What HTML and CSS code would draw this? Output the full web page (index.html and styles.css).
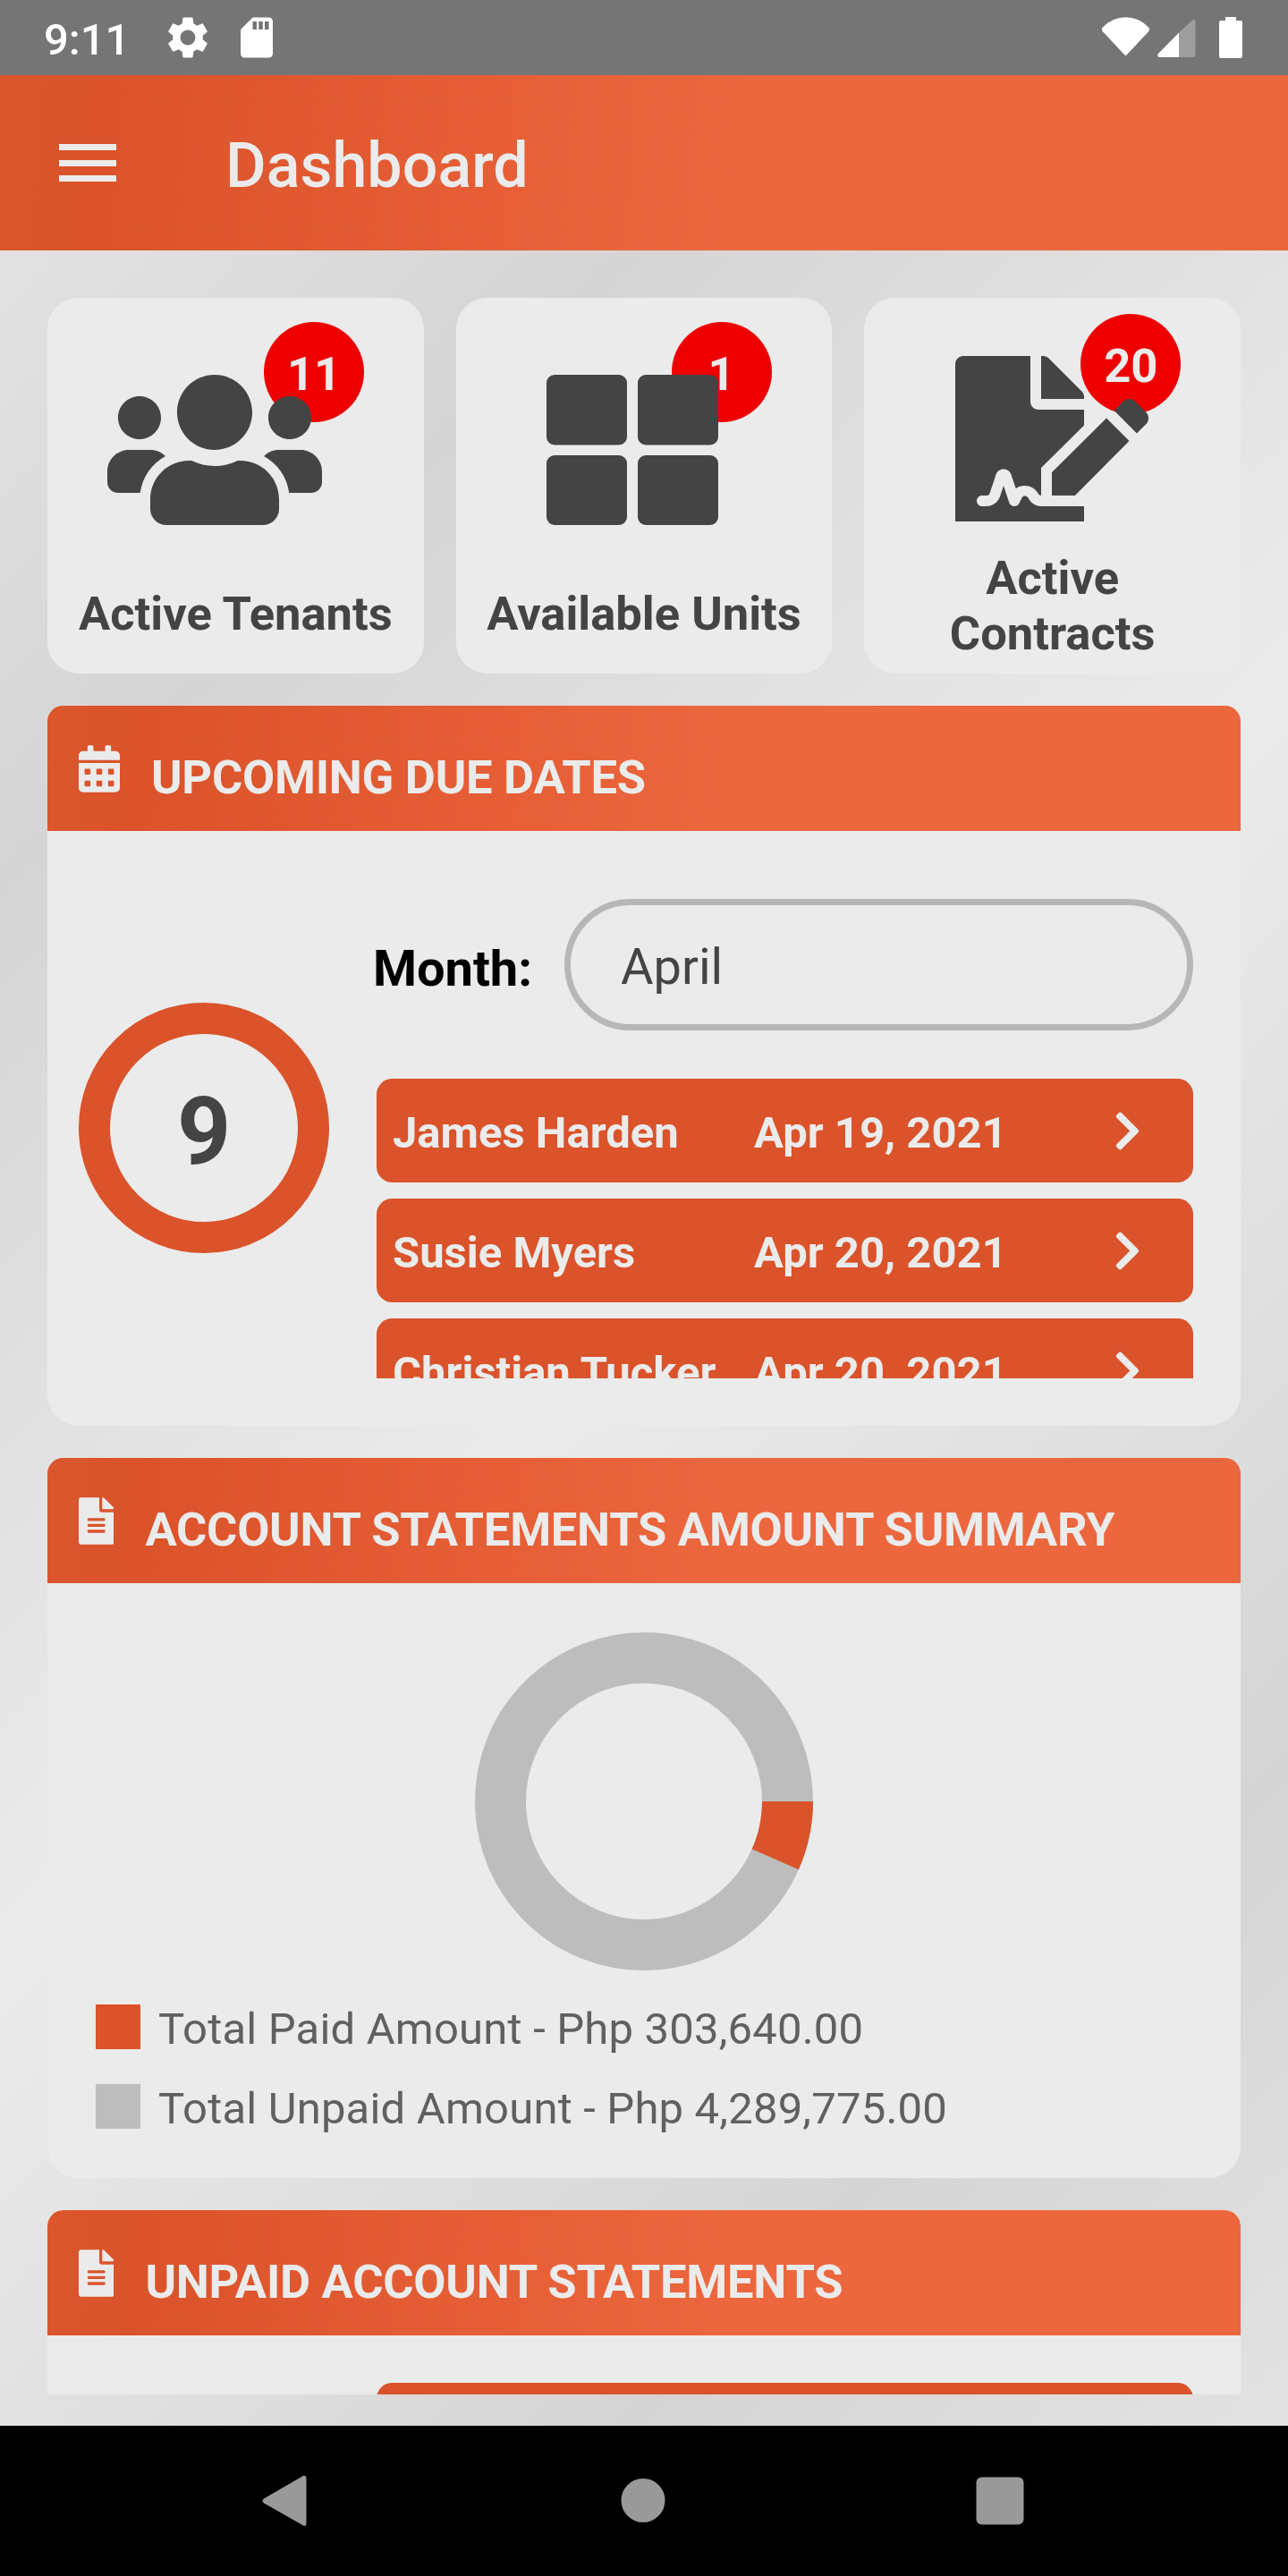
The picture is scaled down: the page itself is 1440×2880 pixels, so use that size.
FILE: index.html
```html
<!DOCTYPE html>
<html lang="en">
<head>
<meta charset="utf-8">
<title>Dashboard</title>
<link rel="stylesheet" href="styles.css">
</head>
<body>
<svg class="defs" aria-hidden="true">
  <symbol id="file-alt" viewBox="0 0 384 512"><path d="M224 136V0H24C10.7 0 0 10.7 0 24v464c0 13.3 10.7 24 24 24h336c13.3 0 24-10.7 24-24V160H248c-13.2 0-24-10.8-24-24zm64 236c0 6.6-5.4 12-12 12H108c-6.6 0-12-5.4-12-12v-8c0-6.6 5.4-12 12-12h168c6.6 0 12 5.4 12 12v8zm0-64c0 6.6-5.4 12-12 12H108c-6.6 0-12-5.4-12-12v-8c0-6.6 5.4-12 12-12h168c6.6 0 12 5.4 12 12v8zm0-72v8c0 6.6-5.4 12-12 12H108c-6.6 0-12-5.4-12-12v-8c0-6.6 5.4-12 12-12h168c6.6 0 12 5.4 12 12zm96-114.1v6.1H256V0h6.1c6.4 0 12.5 2.5 17 7l97.9 98c4.5 4.5 7 10.6 7 16.9z"/></symbol>
  <symbol id="chevron" viewBox="0 0 320 512"><path d="M285.476 272.971L91.132 467.314c-9.373 9.373-24.569 9.373-33.941 0l-22.667-22.667c-9.357-9.357-9.375-24.522-.04-33.901L188.505 256 34.484 101.255c-9.335-9.379-9.317-24.544.04-33.901l22.667-22.667c9.373-9.373 24.569-9.373 33.941 0L285.475 239.03c9.373 9.372 9.373 24.568.001 33.941z"/></symbol>
</svg>
<div class="screen">
  <div class="statusbar">
    <span class="clock">9:11</span>
    <svg class="gear" viewBox="0 0 24 24"><path d="M19.14 12.94c.04-.3.06-.61.06-.94 0-.32-.02-.64-.07-.94l2.03-1.58a.49.49 0 0 0 .12-.61l-1.92-3.32a.488.488 0 0 0-.59-.22l-2.39.96c-.5-.38-1.03-.7-1.62-.94l-.36-2.54a.484.484 0 0 0-.48-.41h-3.84c-.24 0-.43.17-.47.41l-.36 2.54c-.59.24-1.13.57-1.62.94l-2.39-.96c-.22-.08-.47 0-.59.22L2.74 8.87c-.12.21-.08.47.12.61l2.03 1.58c-.05.3-.09.63-.09.94s.02.64.07.94l-2.03 1.58a.49.49 0 0 0-.12.61l1.92 3.32c.12.22.37.29.59.22l2.39-.96c.5.38 1.03.7 1.62.94l.36 2.54c.05.24.24.41.48.41h3.84c.24 0 .44-.17.47-.41l.36-2.54c.59-.24 1.13-.56 1.62-.94l2.39.96c.22.08.47 0 .59-.22l1.92-3.32c.12-.22.07-.47-.12-.61l-2.01-1.58zM12 15.6c-1.98 0-3.6-1.62-3.6-3.6s1.62-3.6 3.6-3.6 3.6 1.62 3.6 3.6-1.62 3.6-3.6 3.6z"/></svg>
    <svg class="sdcard" viewBox="0 0 24 24"><path d="M18 2h-8L4.02 8 4 20c0 1.1.9 2 2 2h12c1.1 0 2-.9 2-2V4c0-1.1-.9-2-2-2zm-6 6h-2V4h2v4zm3 0h-2V4h2v4zm3 0h-2V4h2v4z"/></svg>
    <svg class="signals" viewBox="0 0 158 46">
      <path d="M1 11.500Q12 .3 26.500 .3T52 11.500Q54 13 52.400 16L28 42Q26.500 44 25 42L.6 16Q-1 13 1 11.500Z"/>
      <path d="M86 17.500L62.700 41.200Q61 45 65 45H86Z"/>
      <path class="dim" d="M86 17.500L101 3.500Q104.500 1.500 104.500 5V43Q104.500 45 102.500 45H86Z"/>
      <path d="M138 0h12v4h5q2 0 2 2v38q0 2-2 2h-22q-2 0-2-2V6q0-2 2-2h5z"/>
    </svg>
  </div>

  <header class="appbar">
    <div class="menu"><i></i><i></i><i></i></div>
    <h1>Dashboard</h1>
  </header>

  <main class="content">
    <section class="tiles">
      <div class="tile tile-tenants">
        <span class="badge">11</span>
        <svg class="tile-icon" viewBox="0 0 640 512"><path d="M96 224c35.300 0 64-28.700 64-64s-28.700-64-64-64-64 28.700-64 64 28.700 64 64 64zm448 0c35.300 0 64-28.700 64-64s-28.700-64-64-64-64 28.700-64 64 28.700 64 64 64zm32 32h-64c-17.600 0-33.500 7.100-45.100 18.600 40.300 22.100 68.900 62 75.100 109.400h66c17.700 0 32-14.300 32-32v-32c0-35.300-28.700-64-64-64zm-256 0c61.900 0 112-50.100 112-112S381.900 32 320 32 208 82.100 208 144s50.100 112 112 112zm76.800 32h-8.300c-20.800 10-43.900 16-68.500 16s-47.600-6-68.500-16h-8.300C179.600 288 128 339.600 128 403.200V432c0 26.500 21.500 48 48 48h288c26.500 0 48-21.500 48-48v-28.800c0-63.600-51.600-115.200-115.200-115.200zm-223.700-13.400C161.500 263.100 145.600 256 128 256H64c-35.300 0-64 28.700-64 64v32c0 17.700 14.300 32 32 32h65.900c6.300-47.400 34.900-87.300 75.200-109.400z"/></svg>
        <span class="tile-label">Active Tenants</span>
      </div>
      <div class="tile tile-units">
        <span class="badge">1</span>
        <svg class="tile-icon" viewBox="0 0 512 512"><rect x="0" y="32" width="240" height="209" rx="24"/><rect x="272" y="32" width="240" height="209" rx="24"/><rect x="0" y="272" width="240" height="208" rx="24"/><rect x="272" y="272" width="240" height="208" rx="24"/></svg>
        <span class="tile-label">Available Units</span>
      </div>
      <div class="tile tile-contracts">
        <span class="badge">20</span>
        <svg class="tile-icon" viewBox="0 0 576 493.300"><path d="M218.170 424.140c-2.950-5.920-8.090-6.520-10.170-6.520s-7.220.59-10.020 6.190l-7.670 15.340c-6.370 12.780-25.030 11.370-29.480-2.090L144 386.590l-10.610 31.880c-5.890 17.660-22.380 29.530-41 29.530H80c-8.840 0-16-7.160-16-16s7.160-16 16-16h12.390c4.830 0 9.110-3.080 10.640-7.660l18.190-54.640c3.300-9.810 12.440-16.410 22.780-16.410s19.480 6.590 22.770 16.410l13.880 41.640c19.750-16.190 54.060-9.700 66 14.160 1.890 3.780 5.490 5.950 9.360 6.260v-82.120l128-127.090V160H248c-13.200 0-24-10.800-24-24V0H24C10.700 0 0 10.700 0 24v464c0 13.300 10.700 24 24 24h336c13.300 0 24-10.700 24-24v-40l-128-.11c-16.120-.31-30.580-9.280-37.830-23.750zM384 121.900c0-6.300-2.500-12.400-7-16.900L279.100 7c-4.500-4.500-10.600-7-17-7H256v128h128v-6.100zm-96 225.060V416h68.990l161.680-162.780-67.880-67.880L288 346.960zm280.540-179.630l-31.870-31.870c-9.940-9.940-26.070-9.940-36.010 0l-27.250 27.250 67.880 67.880 27.250-27.250c9.950-9.940 9.950-26.070 0-36.010z"/><path d="M0 470h30v24H0zM350 470h34v24h-34z"/></svg>
        <span class="tile-label">Active<br>Contracts</span>
      </div>
    </section>

    <section class="panel">
      <div class="panel-head">
        <svg class="cal-icon" viewBox="0 0 448 512"><path d="M0 464c0 26.500 21.500 48 48 48h352c26.500 0 48-21.500 48-48V192H0v272zm320-196c0-6.600 5.400-12 12-12h40c6.600 0 12 5.400 12 12v40c0 6.600-5.400 12-12 12h-40c-6.600 0-12-5.400-12-12v-40zm0 128c0-6.600 5.400-12 12-12h40c6.600 0 12 5.400 12 12v40c0 6.600-5.400 12-12 12h-40c-6.600 0-12-5.400-12-12v-40zM192 268c0-6.600 5.400-12 12-12h40c6.600 0 12 5.400 12 12v40c0 6.600-5.400 12-12 12h-40c-6.600 0-12-5.400-12-12v-40zm0 128c0-6.600 5.400-12 12-12h40c6.600 0 12 5.400 12 12v40c0 6.600-5.400 12-12 12h-40c-6.600 0-12-5.400-12-12v-40zM64 268c0-6.600 5.400-12 12-12h40c6.600 0 12 5.400 12 12v40c0 6.600-5.400 12-12 12H76c-6.600 0-12-5.400-12-12v-40zm0 128c0-6.600 5.400-12 12-12h40c6.600 0 12 5.400 12 12v40c0 6.600-5.400 12-12 12H76c-6.600 0-12-5.400-12-12v-40zM400 64h-48V16c0-8.800-7.200-16-16-16h-32c-8.800 0-16 7.200-16 16v48H160V16c0-8.800-7.200-16-16-16h-32c-8.800 0-16 7.200-16 16v48H48C21.500 64 0 85.500 0 112v48h448v-48c0-26.500-21.500-48-48-48z"/></svg>
        <h2>UPCOMING DUE DATES</h2>
      </div>
      <div class="due-body">
        <div class="ring">9</div>
        <div class="due-main">
          <div class="month">
            <span class="month-label">Month:</span>
            <div class="select">April</div>
          </div>
          <div class="rows">
            <div class="row"><span class="name">James Harden</span><span class="date">Apr 19, 2021</span><svg><use href="#chevron"/></svg></div>
            <div class="row"><span class="name">Susie Myers</span><span class="date">Apr 20, 2021</span><svg><use href="#chevron"/></svg></div>
            <div class="row"><span class="name">Christian Tucker</span><span class="date">Apr 20, 2021</span><svg><use href="#chevron"/></svg></div>
          </div>
        </div>
      </div>
    </section>

    <section class="panel">
      <div class="panel-head">
        <svg class="file-icon"><use href="#file-alt"/></svg>
        <h2>ACCOUNT STATEMENTS AMOUNT SUMMARY</h2>
      </div>
      <div class="summary-body">
        <svg class="donut" viewBox="-189 -189 378 378">
          <circle r="160.500"/>
          <path d="M132 0H189A189 189 0 0 1 172.930 76.270L120.780 53.270A132 132 0 0 0 132 0Z"/>
        </svg>
        <div class="legend"><i class="paid"></i><span>Total Paid Amount - Php 303,640.00</span></div>
        <div class="legend"><i class="unpaid"></i><span>Total Unpaid Amount - Php 4,289,775.00</span></div>
      </div>
    </section>

    <section class="panel panel-cut">
      <div class="panel-head">
        <svg class="file-icon"><use href="#file-alt"/></svg>
        <h2>UNPAID ACCOUNT STATEMENTS</h2>
      </div>
      <div class="unpaid-body"><div class="row"></div></div>
    </section>
  </main>

  <nav class="navbar">
    <svg viewBox="0 0 56 56"><path d="M49 0Q52.500-1 52.500 3V53Q52.500 57 49 55.500L5 30.500Q2 28 5 25.500Z"/></svg>
    <svg viewBox="0 0 56 56"><circle cx="29" cy="27.500" r="24.500"/></svg>
    <svg viewBox="0 0 56 56"><rect x="1.500" y="1.500" width="53" height="53" rx="6"/></svg>
  </nav>
</div>
</body>
</html>
```
FILE: styles.css
```css
* { box-sizing: border-box; margin: 0; padding: 0; }
body { font-family: Roboto, "Liberation Sans", sans-serif; }
svg { display: block; flex: none; }
.defs { position: absolute; width: 0; height: 0; }

.screen {
  width: 1440px;
  height: 2880px;
  overflow: hidden;
  display: flex;
  flex-direction: column;
  background: linear-gradient(135deg, #e7e7e7 0%, #d5d5d5 22.800%, #ebebeb 50.900%, #d5d5d5 79%, #e5e5e5 100%);
}

.statusbar {
  height: 84px;
  flex: none;
  display: flex;
  align-items: flex-start;
  padding-left: 49px;
  background: #757575;
  color: #fff;
  fill: #fff;
}
.clock { width: 132.500px; font-size: 49px; font-weight: 500; line-height: 90px; }
.gear { width: 56px; height: 56px; margin-top: 14px; }
.sdcard { width: 54px; height: 54px; margin: 15px 0 0 22px; }
.signals { width: 158px; height: 46px; margin: 19px 50px 0 auto; }
.dim { fill: #9e9e9e; }

.appbar {
  height: 196px;
  flex: none;
  display: flex;
  align-items: center;
  gap: 122px;
  padding: 4px 0 0 66px;
  color: #ebebeb;
}
.appbar, .panel-head {
  background: linear-gradient(94deg, #db562d 0%, #da532a 7%, #da532a 8%, #e65f37 40%, #ec673e 57.500%);
}
.menu { width: 64px; display: flex; flex-direction: column; gap: 10.500px; padding-bottom: 4px; }
.menu i { height: 7px; background: #ebebeb; }
h1 { padding-top: 2px; font-size: 70px; font-weight: 500; line-height: 82px; }

.content {
  height: 2432px;
  flex: none;
  padding: 53px 53px 35px;
  display: flex;
  flex-direction: column;
  gap: 36px;
}

.tiles { display: grid; grid-template-columns: repeat(3, 1fr); gap: 36px; flex: none; }
.tile {
  position: relative;
  height: 420px;
  border-radius: 35px;
  background: #ebebeb;
  padding-top: 74px;
  display: flex;
  flex-direction: column;
}
.badge {
  position: absolute;
  left: 242px;
  top: 27px;
  width: 112px;
  height: 112px;
  border-radius: 50%;
  background: #e00;
  color: #ebebeb;
  font-size: 52.500px;
  font-weight: 700;
  line-height: 116px;
  text-align: center;
}
.tile-icon { position: relative; height: 192px; fill: #444; }
.tile-label {
  margin-top: 56px;
  text-align: center;
  color: #444;
  font-size: 52.500px;
  font-weight: 700;
  line-height: 62px;
  white-space: nowrap;
}
.tile-tenants .tile-icon { width: 240px; margin-left: 67px; }
.tile-units .tile-icon { width: 192px; margin-left: 101px; }
.tile-units .badge { left: 241px; }
.tile-contracts { padding-top: 65px; }
.tile-contracts .badge { top: 18px; }
.tile-contracts .tile-icon { width: 216px; height: 185px; margin-left: 102px; }
.tile-contracts .tile-label { margin-top: 32px; }

.panel { flex: none; border-radius: 17.500px 17.500px 35px 35px; background: #ebebeb; }
.panel-head {
  height: 140px;
  border-radius: 17.500px 17.500px 0 0;
  padding-left: 35px;
  display: flex;
  align-items: center;
  gap: 35px;
  color: #ebebeb;
  fill: #ebebeb;
}
.cal-icon { width: 46px; height: 53px; }
.file-icon { width: 39.400px; height: 53px; }
h2 { padding-top: 20px; font-size: 52.500px; font-weight: 700; line-height: 62px; letter-spacing: -.26px; white-space: nowrap; }

.due-body { height: 665px; display: flex; padding: 76px 53px 53px 35px; gap: 53px; }
.ring {
  width: 280px;
  height: 280px;
  margin-top: 116px;
  flex: none;
  border: 35px solid #da532a;
  border-radius: 50%;
  color: #444;
  font-size: 105px;
  font-weight: 700;
  line-height: 219px;
  text-align: center;
}
.due-main { flex: 1; display: flex; flex-direction: column; gap: 54px; }
.month { height: 147px; flex: none; display: flex; justify-content: flex-end; gap: 36px; margin-left: -8px; }
.month-label { font-size: 56px; font-weight: 700; line-height: 156px; }
.select {
  width: 703px;
  border: 7px solid #b7b7b7;
  border-radius: 73.500px;
  padding-left: 56px;
  color: #444;
  font-size: 56px;
  line-height: 138px;
}
.rows { height: 335px; overflow: hidden; display: flex; flex-direction: column; gap: 18px; }
.row {
  height: 116px;
  flex: none;
  display: flex;
  align-items: center;
  padding-left: 18px;
  border-radius: 17.500px;
  background: #da532a;
  color: #ebebeb;
  fill: #ebebeb;
  font-size: 49px;
  font-weight: 700;
  line-height: 58px;
  white-space: nowrap;
}
.row span { padding-top: 6px; }
.row .name { width: 404px; }
.row .date { width: 402px; }
.row svg { width: 31px; height: 49px; }

.summary-body { height: 665px; padding: 55px 54px 0; }
.donut { width: 378px; height: 378px; margin: 0 auto 38px; }
.donut circle { fill: none; stroke: #bdbdbd; stroke-width: 57px; }
.donut path { fill: #da532a; }
.legend { height: 50px; margin-bottom: 39px; display: flex; align-items: center; gap: 20px; color: #606060; font-size: 49px; line-height: 58px; letter-spacing: .19px; white-space: nowrap; }
.legend i { width: 50px; height: 50px; }
.legend span { padding-top: 6px; }
.paid { background: #da532a; }
.unpaid { background: #bdbdbd; }

.panel-cut { height: 206px; overflow: hidden; border-radius: 17.500px 17.500px 0 0; }
.unpaid-body { padding: 53px 53px 0 368px; }

.navbar {
  height: 168px;
  flex: none;
  background: #000;
  fill: #999;
  display: flex;
  justify-content: space-between;
  padding: 56px 294px 0 290px;
}
.navbar svg { width: 56px; height: 56px; }
```
